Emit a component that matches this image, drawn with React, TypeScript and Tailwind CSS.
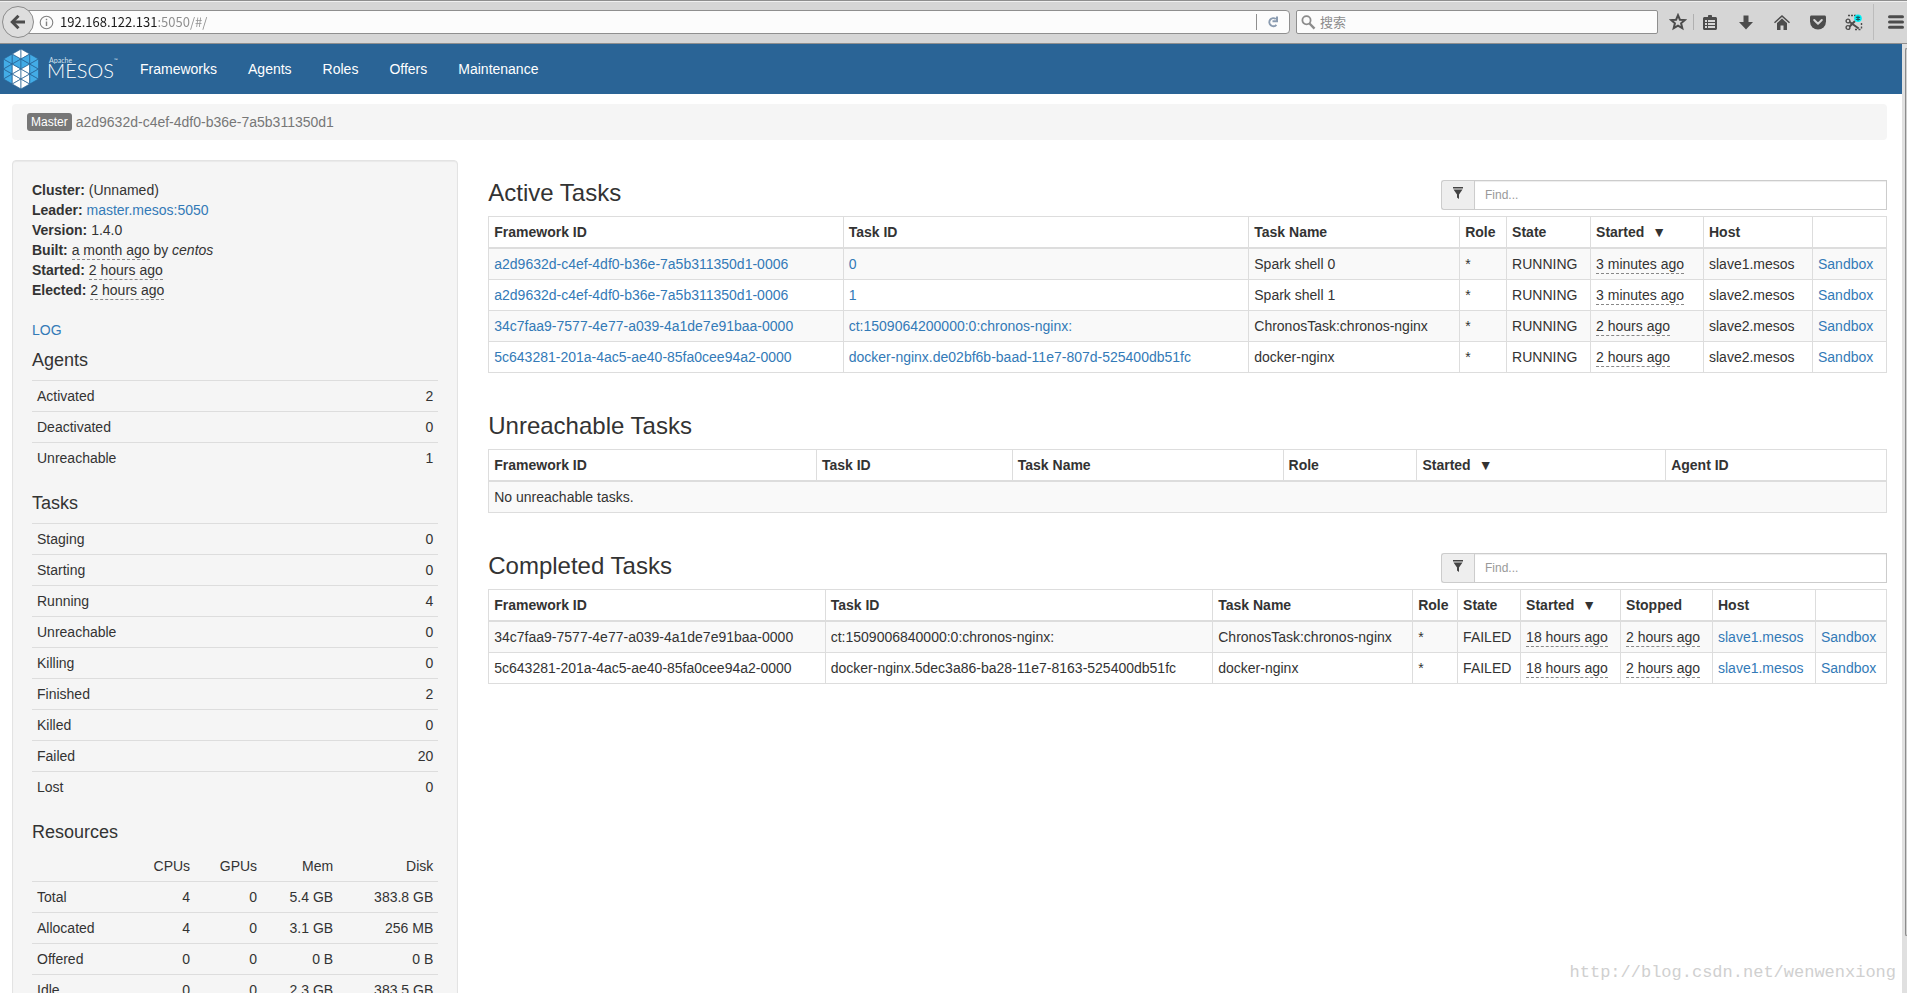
import type { ReactNode } from "react";

const navItems = ["Frameworks", "Agents", "Roles", "Offers", "Maintenance"];

const agentStats: [string, number][] = [
  ["Activated", 2],
  ["Deactivated", 0],
  ["Unreachable", 1],
];

const taskStats: [string, number][] = [
  ["Staging", 0],
  ["Starting", 0],
  ["Running", 4],
  ["Unreachable", 0],
  ["Killing", 0],
  ["Finished", 2],
  ["Killed", 0],
  ["Failed", 20],
  ["Lost", 0],
];

const resources = [
  ["Total", "4", "0", "5.4 GB", "383.8 GB"],
  ["Allocated", "4", "0", "3.1 GB", "256 MB"],
  ["Offered", "0", "0", "0 B", "0 B"],
  ["Idle", "0", "0", "2.3 GB", "383.5 GB"],
];

const activeTasks = [
  { framework: "a2d9632d-c4ef-4df0-b36e-7a5b311350d1-0006", id: "0", name: "Spark shell 0", started: "3 minutes ago", host: "slave1.mesos" },
  { framework: "a2d9632d-c4ef-4df0-b36e-7a5b311350d1-0006", id: "1", name: "Spark shell 1", started: "3 minutes ago", host: "slave2.mesos" },
  { framework: "34c7faa9-7577-4e77-a039-4a1de7e91baa-0000", id: "ct:1509064200000:0:chronos-nginx:", name: "ChronosTask:chronos-nginx", started: "2 hours ago", host: "slave2.mesos" },
  { framework: "5c643281-201a-4ac5-ae40-85fa0cee94a2-0000", id: "docker-nginx.de02bf6b-baad-11e7-807d-525400db51fc", name: "docker-nginx", started: "2 hours ago", host: "slave2.mesos" },
];

const completedTasks = [
  { framework: "34c7faa9-7577-4e77-a039-4a1de7e91baa-0000", id: "ct:1509006840000:0:chronos-nginx:", name: "ChronosTask:chronos-nginx" },
  { framework: "5c643281-201a-4ac5-ae40-85fa0cee94a2-0000", id: "docker-nginx.5dec3a86-ba28-11e7-8163-525400db51fc", name: "docker-nginx" },
];

function Link({ children }: { children: ReactNode }) {
  return (
    <a href="#/" className="text-[#337ab7] hover:underline">
      {children}
    </a>
  );
}

function Ago({ children }: { children: ReactNode }) {
  return <span className="border-b border-dashed border-[#888] pb-px">{children}</span>;
}

/* ---------- browser toolbar ---------- */

function ToolButton({ label, children }: { label: string; children: ReactNode }) {
  return (
    <button type="button" aria-label={label} className="flex size-5 items-center justify-center text-[#4c4c4c]">
      {children}
    </button>
  );
}

function BrowserBar() {
  return (
    <header className="flex h-11 shrink-0 items-center border-y border-[#8f8f8f] bg-[#d6d6d6] pr-[1px] font-['Noto_Sans_CJK_SC',sans-serif] text-[13px] shadow-[inset_0_1px_0_#f0f0f0]">
      <button
        type="button"
        aria-label="Back"
        className="z-10 ml-0.5 flex size-8 shrink-0 items-center justify-center rounded-full border border-[#8c8c8c] bg-[#dedede] text-[#4c4c4c]"
      >
        <svg width="16" height="16" viewBox="0 0 16 16" fill="none" stroke="currentColor" strokeWidth="3">
          <path d="M2.5 8H15" />
          <path d="M8.5 1.8 2.3 8l6.2 6.2" />
        </svg>
      </button>
      <div className="-ml-2 flex h-6 min-w-0 flex-1 items-center rounded-r-sm border border-[#8f8f8f] bg-[#fcfcfc] pl-3">
        <svg className="shrink-0" width="15" height="15" viewBox="0 0 15 15" fill="none" stroke="#808080">
          <circle cx="7.5" cy="7.5" r="6.3" strokeWidth="1.1" />
          <path d="M7.5 6.5V11M7.5 3.8v1.5" strokeWidth="1.4" />
        </svg>
        <input
          aria-label="Address"
          defaultValue="192.168.122.131:5050/#/"
          className="ml-1.5 min-w-0 flex-1 bg-[linear-gradient(90deg,#1a1a1a_97px,#8c8c8c_97px)] bg-clip-text leading-5 text-transparent outline-none"
        />
        <span className="h-4 w-px bg-[#8f8f8f]" />
        <button type="button" aria-label="Reload" className="flex w-8 items-center justify-center text-[#8a9bb0]">
          <svg width="12" height="14" viewBox="0 0 12 14" fill="none" stroke="currentColor" strokeWidth="2">
            <path d="M8.8 4A4 4 0 1 0 9.4 9.800" />
            <path d="M10 1.500v4.700H5.500" />
          </svg>
        </button>
      </div>
      <div className="ml-1.5 flex h-6 w-[19%] items-center rounded-xs border border-[#8f8f8f] bg-[#fcfcfc] pl-1">
        <svg className="shrink-0" width="15" height="15" viewBox="0 0 15 15" fill="none" stroke="#8c8c8c">
          <circle cx="5.5" cy="5.3" r="4.1" strokeWidth="1.8" />
          <path d="m8.5 8.5 5 5.2" strokeWidth="2.4" />
        </svg>
        <input aria-label="搜索" placeholder="搜索" className="ml-1 min-w-0 flex-1 leading-5 outline-none placeholder:text-[#8c8c8c]" />
      </div>
      <div className="ml-2.5 flex items-center">
        <ToolButton label="Bookmark">
          <svg width="18" height="18" viewBox="0 0 18 18" fill="none" stroke="currentColor" strokeWidth="2">
            <path d="m9 2.2 1.9 4.5 4.9.4-3.7 3.2 1.2 4.9L9 12.6l-4.3 2.6 1.2-4.9L2.2 7.1l4.9-.4z" />
          </svg>
        </ToolButton>
        <span className="ml-[5px] mr-1.5 h-4 w-px bg-[#b0b0b0]" />
        <div className="flex gap-4">
          <ToolButton label="Library">
            <svg width="16" height="15" viewBox="-1 0 16 15" fill="currentColor">
              <path fillRule="evenodd" d="M5 2V.8C5 .3 5.3 0 5.8 0h2.4c.5 0 .8.3.8.8V2h3.500c.8 0 1.500.7 1.500 1.500v10c0 .8-.7 1.500-1.500 1.500h-11C.7 15 0 14.300 0 13.500v-10C0 2.700.7 2 1.500 2zM2 5v2h2V5zm3 0v2h7V5zM2 8v2h2V8zm3 0v2h7V8zm-3 3v2h2v-2zm3 0v2h7v-2z" />
            </svg>
          </ToolButton>
          <ToolButton label="Downloads">
            <svg width="14" height="15" viewBox="0 0 14 15" fill="currentColor">
              <path d="M4.500.6h5V7H14L7 14.600 0 7h4.500z" />
            </svg>
          </ToolButton>
          <ToolButton label="Home">
            <svg width="16" height="15" viewBox="0 0 16 15" fill="currentColor">
              <path d="M8 0 16 7.200l-1 1L8 2 1 8.200l-1-1z" />
              <path d="m8 3.600 5 4.500V15H9.500v-4.500h-3V15H3V8.100z" />
            </svg>
          </ToolButton>
          <ToolButton label="Pocket">
            <svg width="16" height="15" viewBox="0 0 16 15">
              <path fill="currentColor" d="M1.500.5h13c.9 0 1.500.6 1.500 1.500v4.500a8 8 0 0 1-16 0V2C0 1.100.6.500 1.500.500z" />
              <path d="m4.200 5 3.800 3.700L11.800 5" fill="none" stroke="#d6d6d6" strokeWidth="2" strokeLinecap="round" strokeLinejoin="round" />
            </svg>
          </ToolButton>
          <ToolButton label="Screenshot">
            <svg width="18" height="17" viewBox="0 0 18 17" fill="none" stroke="currentColor">
              <path d="M3 1.500h8" strokeWidth="1.600" strokeDasharray="2 1" />
              <path d="M16.500 9v6M10 15.500h6" strokeWidth="1.400" strokeDasharray="2 1.500" />
              <circle cx="3" cy="7" r="1.900" strokeWidth="1.400" />
              <circle cx="3" cy="13.500" r="1.900" strokeWidth="1.400" />
              <path d="m4.700 8 9 6.500M4.700 12.500 10 7" strokeWidth="2" />
              <circle cx="13" cy="4.200" r="3.800" fill="#00f2f8" stroke="none" />
              <path d="M13 1.700v5M10.900 3l4.200 2.400M15.100 3l-4.200 2.400" stroke="#155a66" strokeWidth="1.200" />
            </svg>
          </ToolButton>
        </div>
        <span className="ml-[9px] mr-3 h-9 w-px bg-[#bcbcbc]" />
        <ToolButton label="Menu">
          <svg width="16" height="14" viewBox="0 0 16 14" stroke="currentColor" strokeWidth="3" strokeLinecap="round">
            <path d="M1.500 1.800h13M1.500 7h13M1.500 12.200h13" />
          </svg>
        </ToolButton>
      </div>
    </header>
  );
}

/* ---------- Mesos navigation ---------- */

const lineX = [0, 8.75, 17.5, 26.25, 35];
const lineYs = [
  [10, 20, 30],
  [5, 15, 25, 35],
  [0, 10, 20, 30, 40],
  [5, 15, 25, 35],
  [10, 20, 30],
];

function logoTriangles() {
  const out: { points: string; white: boolean }[] = [];
  for (let c = 0; c < 4; c++) {
    for (const [from, to] of [
      [c, c + 1],
      [c + 1, c],
    ]) {
      const ys = lineYs[from];
      for (let i = 0; i < ys.length - 1; i++) {
        const mid = ys[i] + 5;
        if (!lineYs[to].includes(mid)) continue;
        const inner = c === 1 || c === 2;
        out.push({
          points: `${lineX[from]},${ys[i]} ${lineX[from]},${ys[i + 1]} ${lineX[to]},${mid}`,
          white: inner && (mid <= 5 || mid >= 20),
        });
      }
    }
  }
  return out;
}

function Logo() {
  return (
    <svg width="122" height="50" viewBox="0 0 122 50" role="img" aria-label="Apache Mesos">
      <g transform="translate(3.500 5)">
        {logoTriangles().map((t) => (
          <polygon key={t.points} points={t.points} fill={t.white ? "#ffffff" : "#43ace6"} stroke="#2a6496" strokeWidth="0.7" />
        ))}
      </g>
      <text x="49" y="19" fontSize="7" fill="#d5e2ee" fontFamily="Lato, sans-serif">Apache</text>
      <text x="47" y="34" fontSize="20" fontWeight="300" fill="#ffffff" fontFamily="Lato, sans-serif">MESOS</text>
      <text x="114" y="18" fontSize="5" fill="#d5e2ee" fontFamily="Lato, sans-serif">™</text>
    </svg>
  );
}

function NavBar() {
  return (
    <nav className="flex bg-[#2a6496] text-white">
      <a href="#/" className="block h-[50px]">
        <Logo />
      </a>
      <ul className="flex gap-px pl-[3px]">
        {navItems.map((item) => (
          <li key={item}>
            <a href="#/" className="block px-[15px] py-[15px]">
              {item}
            </a>
          </li>
        ))}
      </ul>
    </nav>
  );
}

/* ---------- sidebar ---------- */

function StatTable({ title, rows }: { title: string; rows: [string, number][] }) {
  return (
    <section>
      <h4 className="mb-2.5 text-lg leading-5">{title}</h4>
      <table className="mb-5 w-full border-collapse">
        <tbody>
          {rows.map(([name, value]) => (
            <tr key={name} className="border-t border-[#ddd]">
              <td className="p-[5px]">{name}</td>
              <td className="p-[5px] text-right">{value}</td>
            </tr>
          ))}
        </tbody>
      </table>
    </section>
  );
}

function Sidebar() {
  return (
    <aside className="rounded border border-[#e3e3e3] bg-[#f5f5f5] p-[19px] shadow-[inset_0_1px_1px_rgba(0,0,0,0.05)]">
      <p><b>Cluster:</b> (Unnamed)</p>
      <p><b>Leader:</b> <Link>master.mesos:5050</Link></p>
      <p><b>Version:</b> 1.4.0</p>
      <p><b>Built:</b> <Ago>a month ago</Ago> by <i>centos</i></p>
      <p><b>Started:</b> <Ago>2 hours ago</Ago></p>
      <p><b>Elected:</b> <Ago>2 hours ago</Ago></p>
      <p className="mt-5 mb-2.5"><Link>LOG</Link></p>
      <StatTable title="Agents" rows={agentStats} />
      <StatTable title="Tasks" rows={taskStats} />
      <h4 className="mb-[9px] text-lg leading-5">Resources</h4>
      <table className="w-full border-collapse">
        <colgroup>
          <col className="w-[105px]" />
          <col className="w-[58px]" />
          <col className="w-[67px]" />
          <col className="w-[76px]" />
          <col className="w-[100px]" />
        </colgroup>
        <thead>
          <tr>
            <td />
            {["CPUs", "GPUs", "Mem", "Disk"].map((h) => (
              <th key={h} scope="col" className="p-[5px] text-right font-normal">{h}</th>
            ))}
          </tr>
        </thead>
        <tbody>
          {resources.map(([name, ...values]) => (
            <tr key={name} className="border-t border-[#ddd]">
              <td className="p-[5px]">{name}</td>
              {values.map((v, i) => (
                <td key={i} className="p-[5px] text-right">{v}</td>
              ))}
            </tr>
          ))}
        </tbody>
      </table>
    </aside>
  );
}

/* ---------- task tables ---------- */

function FindBox({ label }: { label: string }) {
  return (
    <div className="flex h-[30px] w-[446px] text-xs">
      <span className="flex w-[33px] items-center justify-center rounded-l-[3px] border border-r-0 border-[#ccc] bg-[#eee] pb-1">
        <svg width="10" height="12" viewBox="0 0 10 12" fill="#444">
          <path d="M0 0h10v1.500H0zM.5 2.500h9L6 7.500v4.500L4 10.500v-3z" />
        </svg>
      </span>
      <input
        aria-label={label}
        placeholder="Find..."
        className="min-w-0 flex-1 border border-[#ccc] bg-white px-2.5 shadow-[inset_0_1px_1px_rgba(0,0,0,0.075)] outline-none placeholder:text-[#999]"
      />
    </div>
  );
}

function TaskSection({ title, find, cols, heads, children }: { title: string; find?: boolean; cols: string[]; heads: string[]; children: ReactNode }) {
  return (
    <section>
      <div className="flex h-9 items-start justify-between">
        <h3 className="text-2xl leading-[26px]">{title}</h3>
        {find && <FindBox label={`Filter ${title}`} />}
      </div>
      <table className="w-full border-collapse">
        <colgroup>
          {cols.map((c, i) => (
            <col key={i} className={c} />
          ))}
        </colgroup>
        <thead>
          <tr>
            {heads.map((h, i) => (
              <th key={i} scope="col" className="border border-b-2 border-[#ddd] p-[5px] text-left font-bold whitespace-nowrap">
                {h}
                {h === "Started" && <span className="ml-2">▼</span>}
              </th>
            ))}
          </tr>
        </thead>
        <tbody className="[&_td]:border [&_td]:border-[#ddd] [&_td]:p-[5px] [&_tr:nth-child(odd)]:bg-[#f9f9f9]">{children}</tbody>
      </table>
    </section>
  );
}

export default function App() {
  return (
    <div className="flex h-screen flex-col overflow-hidden bg-white font-['Liberation_Sans',Arial,sans-serif] text-sm leading-5 text-[#333]">
      <BrowserBar />
      <div className="flex min-h-0 flex-1">
        <div className="relative min-w-0 flex-1 overflow-hidden">
          <NavBar />
          <div className="pt-2.5 pr-[15px] pl-3">
            <div className="flex items-center gap-1 rounded bg-[#f5f5f5] px-[15px] py-2 text-[#777]">
              <span className="rounded-[3px] bg-[#777] px-1 text-xs leading-[18px] text-white">Master</span>
              <span>a2d9632d-c4ef-4df0-b36e-7a5b311350d1</span>
            </div>
            <div className="mt-5 grid grid-cols-4 items-start gap-[30px]">
              <Sidebar />
              <main className="col-span-3 flex flex-col gap-10 pt-5">
                <TaskSection
                  title="Active Tasks"
                  find
                  cols={["w-[355px]", "w-[406px]", "w-[211px]", "w-[47px]", "w-[84px]", "w-[113px]", "w-[109px]", "w-[74px]"]}
                  heads={["Framework ID", "Task ID", "Task Name", "Role", "State", "Started", "Host", ""]}
                >
                  {activeTasks.map((t) => (
                    <tr key={t.id}>
                      <td><Link>{t.framework}</Link></td>
                      <td><Link>{t.id}</Link></td>
                      <td>{t.name}</td>
                      <td>*</td>
                      <td>RUNNING</td>
                      <td><Ago>{t.started}</Ago></td>
                      <td>{t.host}</td>
                      <td><Link>Sandbox</Link></td>
                    </tr>
                  ))}
                </TaskSection>
                <TaskSection
                  title="Unreachable Tasks"
                  cols={["w-[328px]", "w-[196px]", "w-[271px]", "w-[134px]", "w-[249px]", "w-[221px]"]}
                  heads={["Framework ID", "Task ID", "Task Name", "Role", "Started", "Agent ID"]}
                >
                  <tr>
                    <td colSpan={6}>No unreachable tasks.</td>
                  </tr>
                </TaskSection>
                <TaskSection
                  title="Completed Tasks"
                  find
                  cols={["w-[337px]", "w-[388px]", "w-[200px]", "w-[45px]", "w-[63px]", "w-[100px]", "w-[92px]", "w-[103px]", "w-[71px]"]}
                  heads={["Framework ID", "Task ID", "Task Name", "Role", "State", "Started", "Stopped", "Host", ""]}
                >
                  {completedTasks.map((t) => (
                    <tr key={t.id}>
                      <td>{t.framework}</td>
                      <td>{t.id}</td>
                      <td>{t.name}</td>
                      <td>*</td>
                      <td>FAILED</td>
                      <td><Ago>18 hours ago</Ago></td>
                      <td><Ago>2 hours ago</Ago></td>
                      <td><Link>slave1.mesos</Link></td>
                      <td><Link>Sandbox</Link></td>
                    </tr>
                  ))}
                </TaskSection>
              </main>
            </div>
          </div>
          <span className="absolute right-1.5 bottom-2.5 font-['Liberation_Mono',monospace] text-[17px] text-[#d0d0d0]">
            http://blog.csdn.net/wenwenxiong
          </span>
        </div>
        <div className="w-[5px] bg-[#e0e0e0] pt-1 pl-[3px]">
          <div className="h-[94%] rounded-l-sm border border-r-0 border-[#8c8c8c] bg-[#d0d0d0]" />
        </div>
      </div>
    </div>
  );
}
